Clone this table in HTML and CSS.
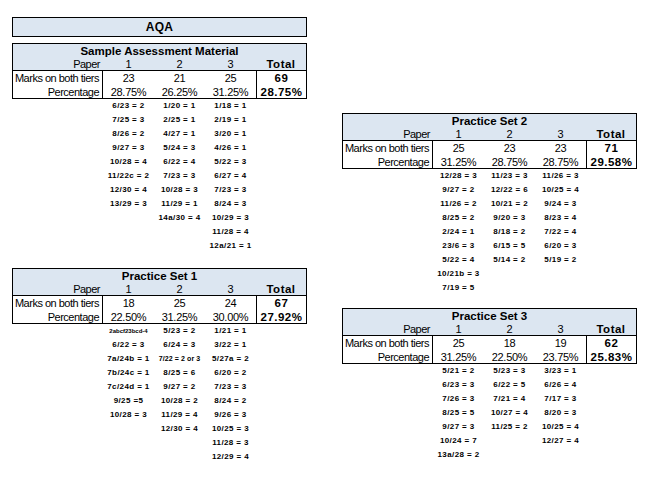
FILE: index.html
```html
<!DOCTYPE html>
<html lang="en">
<head>
<meta charset="utf-8">
<title>AQA</title>
<link rel="stylesheet" href="styles.css">
</head>
<body>
<div class="sheet">
  <div class="col col-left">
    <div class="title-box">AQA</div>

    <section class="block block-sam">
      <div class="tbl">
        <div class="hd">
          <div class="ttl">Sample Assessment Material</div>
          <div class="row">
            <div class="lab">Paper</div><div class="c">1</div><div class="c">2</div><div class="c">3</div><div class="c tot">Total</div>
          </div>
        </div>
        <div class="bd">
          <div class="row">
            <div class="lab">Marks on both tiers</div><div class="c">23</div><div class="c">21</div><div class="c">25</div><div class="c tot">69</div>
          </div>
          <div class="row">
            <div class="lab">Percentage</div><div class="c">28.75%</div><div class="c">26.25%</div><div class="c">31.25%</div><div class="c tot">28.75%</div>
          </div>
        </div>
      </div>
      <div class="notes">
        <div class="spacer"></div>
        <ul><li>6/23 = 2</li><li>7/25 = 3</li><li>8/26 = 2</li><li>9/27 = 3</li><li>10/28 = 4</li><li>11/22c = 2</li><li>12/30 = 4</li><li>13/29 = 3</li></ul>
        <ul><li>1/20 = 1</li><li>2/25 = 1</li><li>4/27 = 1</li><li>5/24 = 3</li><li>6/22 = 4</li><li>7/23 = 3</li><li>10/28 = 3</li><li>11/29 = 1</li><li>14a/30 = 4</li></ul>
        <ul><li>1/18 = 1</li><li>2/19 = 1</li><li>3/20 = 1</li><li>4/26 = 1</li><li>5/22 = 3</li><li>6/27 = 4</li><li>7/23 = 3</li><li>8/24 = 3</li><li>10/29 = 3</li><li>11/28 = 4</li><li>12a/21 = 1</li></ul>
      </div>
    </section>

    <section class="block block-ps1">
      <div class="tbl">
        <div class="hd">
          <div class="ttl">Practice Set 1</div>
          <div class="row">
            <div class="lab">Paper</div><div class="c">1</div><div class="c">2</div><div class="c">3</div><div class="c tot">Total</div>
          </div>
        </div>
        <div class="bd">
          <div class="row">
            <div class="lab">Marks on both tiers</div><div class="c">18</div><div class="c">25</div><div class="c">24</div><div class="c tot">67</div>
          </div>
          <div class="row">
            <div class="lab">Percentage</div><div class="c">22.50%</div><div class="c">31.25%</div><div class="c">30.00%</div><div class="c tot">27.92%</div>
          </div>
        </div>
      </div>
      <div class="notes">
        <div class="spacer"></div>
        <ul><li class="tiny">2abcf23bcd-4</li><li>6/22 = 3</li><li>7a/24b = 1</li><li>7b/24c = 1</li><li>7c/24d = 1</li><li>9/25 =5</li><li>10/28 = 3</li></ul>
        <ul><li>5/23 = 2</li><li>6/24 = 3</li><li class="small">7/22 = 2 or 3</li><li>8/25 = 6</li><li>9/27 = 2</li><li>10/28 = 2</li><li>11/29 = 4</li><li>12/30 = 4</li></ul>
        <ul><li>1/21 = 1</li><li>3/22 = 1</li><li>5/27a = 2</li><li>6/20 = 2</li><li>7/23 = 3</li><li>8/24 = 2</li><li>9/26 = 3</li><li>10/25 = 3</li><li>11/28 = 3</li><li>12/29 = 4</li></ul>
      </div>
    </section>
  </div>

  <div class="col col-right">
    <section class="block block-ps2">
      <div class="tbl">
        <div class="hd">
          <div class="ttl">Practice Set 2</div>
          <div class="row">
            <div class="lab">Paper</div><div class="c">1</div><div class="c">2</div><div class="c">3</div><div class="c tot">Total</div>
          </div>
        </div>
        <div class="bd">
          <div class="row">
            <div class="lab">Marks on both tiers</div><div class="c">25</div><div class="c">23</div><div class="c">23</div><div class="c tot">71</div>
          </div>
          <div class="row">
            <div class="lab">Percentage</div><div class="c">31.25%</div><div class="c">28.75%</div><div class="c">28.75%</div><div class="c tot">29.58%</div>
          </div>
        </div>
      </div>
      <div class="notes">
        <div class="spacer"></div>
        <ul><li>12/28 = 3</li><li>9/27 = 2</li><li>11/26 = 2</li><li>8/25 = 2</li><li>2/24 = 1</li><li>23/6 = 3</li><li>5/22 = 4</li><li>10/21b = 3</li><li>7/19 = 5</li></ul>
        <ul><li>11/23 = 3</li><li>12/22 = 6</li><li>10/21 = 2</li><li>9/20 = 3</li><li>8/18 = 2</li><li>6/15 = 5</li><li>5/14 = 2</li></ul>
        <ul><li>11/26 = 3</li><li>10/25 = 4</li><li>9/24 = 3</li><li>8/23 = 4</li><li>7/22 = 4</li><li>6/20 = 3</li><li>5/19 = 2</li></ul>
      </div>
    </section>

    <section class="block block-ps3">
      <div class="tbl">
        <div class="hd">
          <div class="ttl">Practice Set 3</div>
          <div class="row">
            <div class="lab">Paper</div><div class="c">1</div><div class="c">2</div><div class="c">3</div><div class="c tot">Total</div>
          </div>
        </div>
        <div class="bd">
          <div class="row">
            <div class="lab">Marks on both tiers</div><div class="c">25</div><div class="c">18</div><div class="c">19</div><div class="c tot">62</div>
          </div>
          <div class="row">
            <div class="lab">Percentage</div><div class="c">31.25%</div><div class="c">22.50%</div><div class="c">23.75%</div><div class="c tot">25.83%</div>
          </div>
        </div>
      </div>
      <div class="notes">
        <div class="spacer"></div>
        <ul><li>5/21 = 2</li><li>6/23 = 3</li><li>7/26 = 3</li><li>8/25 = 5</li><li>9/27 = 3</li><li>10/24 = 7</li><li>13a/28 = 2</li></ul>
        <ul><li>5/23 = 3</li><li>6/22 = 5</li><li>7/21 = 4</li><li>10/27 = 4</li><li>11/25 = 2</li></ul>
        <ul><li>3/23 = 1</li><li>6/26 = 4</li><li>7/17 = 3</li><li>8/20 = 3</li><li>10/25 = 4</li><li>12/27 = 4</li></ul>
      </div>
    </section>
  </div>
</div>
</body>
</html>
```

FILE: styles.css
```css
* { box-sizing: border-box; }

html, body {
  margin: 0;
  padding: 0;
  background: #ffffff;
}

body {
  font-family: "Liberation Sans", Arial, sans-serif;
  font-size: 11px;
  letter-spacing: -0.3px;
  color: #000000;
}

.sheet {
  display: flex;
  align-items: flex-start;
  gap: 35px;
  padding-left: 12px;
}

.col {
  width: 295px;
  display: flex;
  flex-direction: column;
}

.col-left { padding-top: 17px; }
.col-right { padding-top: 113px; }

.title-box {
  height: 20px;
  border: 1px solid #000;
  background: #dce6f1;
  font-weight: bold;
  font-size: 12px;
  line-height: 18px;
  text-align: center;
  letter-spacing: 0.3px;
}

.block-sam { margin-top: 6px; }
.block-ps1 { margin-top: 15px; }
.block-ps3 { margin-top: 13px; }

.tbl {
  border: 1px solid #000;
}

.hd {
  background: #dce6f1;
}

.ttl {
  height: 13px;
  line-height: 14px;
  text-align: center;
  font-weight: bold;
  font-size: 11.5px;
  letter-spacing: 0;
}

.row {
  display: grid;
  grid-template-columns: 90px 51px 51px 51px 1fr;
  height: 13px;
  line-height: 14px;
}

.bd {
  border-top: 1px solid #000;
}

.bd .row:first-child { height: 14px; }

.lab {
  text-align: right;
  padding-right: 3px;
  white-space: nowrap;
  letter-spacing: -0.5px;
}

.bd .lab { border-right: 1px solid #000; }
.bd .tot { border-left: 1px solid #000; }

.c {
  text-align: center;
  white-space: nowrap;
}

.tot {
  font-weight: bold;
  font-size: 11.5px;
  letter-spacing: 0.5px;
}

.notes {
  display: grid;
  grid-template-columns: 91px 51px 51px 51px;
}

.notes ul {
  list-style: none;
  margin: 0;
  padding: 0;
}

.notes li {
  height: 14px;
  line-height: 14px;
  text-align: center;
  white-space: nowrap;
  font-weight: bold;
  font-size: 8px;
  letter-spacing: 0.4px;
}

.notes li.small {
  font-size: 7px;
  letter-spacing: 0.1px;
}

.notes li.tiny {
  font-size: 6px;
  letter-spacing: 0;
}
```
